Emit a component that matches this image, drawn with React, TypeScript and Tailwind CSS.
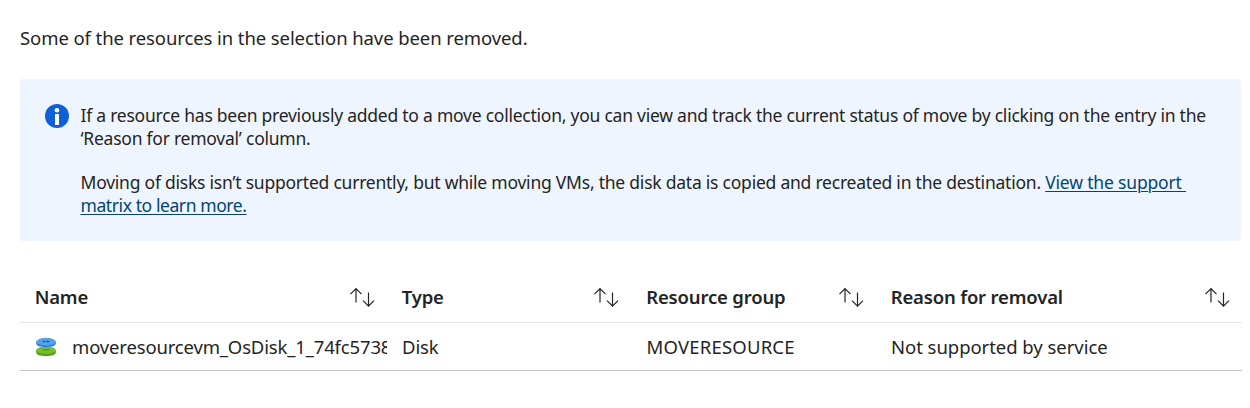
import React from "react";

const columns = ["Name", "Type", "Resource group", "Reason for removal"];

function SortIcon() {
  return (
    <svg width="26" height="20" viewBox="0 0 26 20" fill="none" stroke="#242424" strokeWidth="1.2" className="shrink-0">
      <path d="M7 15.6V1.7M1.5 7.2L7 1.7l5.5 5.5" />
      <path d="M19.5 5.4v13.7M14 13.6l5.5 5.5 5.5-5.5" />
    </svg>
  );
}

function InfoIcon() {
  return (
    <svg width="24" height="24" viewBox="0 0 24 24" className="shrink-0">
      <circle cx="12" cy="12" r="12" fill="#0f5fd7" />
      <circle cx="12" cy="6.2" r="2.3" fill="#fff" />
      <rect x="10" y="9.9" width="4" height="11" rx="0.4" fill="#fff" />
    </svg>
  );
}

function DiskIcon() {
  return (
    <svg width="20" height="20" viewBox="0 0 20 20" className="shrink-0">
      <path d="M.2 13v2.6c0 2.2 3.6 3.6 9.8 3.6s9.8-1.4 9.8-3.6V13z" fill="#5a9a25" />
      <ellipse cx="10" cy="13.2" rx="9.8" ry="3.8" fill="#76bc2d" />
      <path d="M6.7 12.7h6.6" stroke="#4f8a20" strokeWidth="1.1" />
      <path d="M.2 4.4v2.2c0 2.2 3.6 3.6 9.8 3.6s9.8-1.4 9.8-3.6V4.4z" fill="#2f7fd8" />
      <ellipse cx="10" cy="4.6" rx="9.8" ry="3.8" fill="#55a3ee" />
      <path d="M6.7 4.4h2.6M10.4 4.4h2.8" stroke="#1d4f93" strokeWidth="1.5" />
    </svg>
  );
}

export default function App() {
  return (
    <main className="h-[408px] w-full overflow-hidden bg-white pl-5 pt-[26px] font-['Noto_Sans',sans-serif] text-[18.5px] text-[#242424]">
      <p className="h-[53px] leading-6 tracking-[-0.09px]">Some of the resources in the selection have been removed.</p>

      <section className="flex h-[162px] w-[1221px] gap-[11.5px] rounded-[3px] bg-[#eff5ff] pl-[25px] pt-[25px] text-[17.5px] leading-[22.4px] tracking-[-0.24px]">
        <InfoIcon />
        <div className="whitespace-nowrap pt-[0.1px]">
          <p>
            If a resource has been previously added to a move collection, you can view and track the current status of move by clicking on the entry in the
            <br />
            ‘Reason for removal’ column.
          </p>
          <p className="mt-[22.4px] tracking-[-0.23px]">
            Moving of disks isn’t supported currently, but while moving VMs, the disk data is copied and recreated in the destination.{" "}
            <a href="#" className="text-[#004578] underline decoration-1 underline-offset-[1.5px]">
              <span className="tracking-[-0.17px]">View the support&nbsp;</span>
              <br />
              <span className="tracking-[-0.41px]">matrix to learn more.</span>
            </a>
          </p>
        </div>
      </section>

      <div className="mt-[30px] w-[1222px]">
        <div className="grid h-[52px] grid-cols-[367px_244.5px_244.5px_1fr] items-center border-b border-[#e6e6e6] font-semibold tracking-[-0.17px]">
          {columns.map((label) => (
            <div key={label} className="flex items-center justify-between pl-[14.7px] pr-[12.5px]">
              <span>{label}</span>
              <SortIcon />
            </div>
          ))}
        </div>
        <div className="grid h-12 grid-cols-[367px_244.5px_244.5px_1fr] items-center border-b border-[#c4c4c4]">
          <div className="flex items-center gap-4 overflow-hidden whitespace-nowrap pl-4">
            <DiskIcon />
            <span className="tracking-[-0.16px]">moveresourcevm_OsDisk_1_74fc5738</span>
          </div>
          <div className="pl-[15px] tracking-[-0.1px]">Disk</div>
          <div className="pl-[15px] tracking-[0.2px]">MOVERESOURCE</div>
          <div className="pl-[15px] tracking-[-0.04px]">Not supported by service</div>
        </div>
      </div>
    </main>
  );
}
